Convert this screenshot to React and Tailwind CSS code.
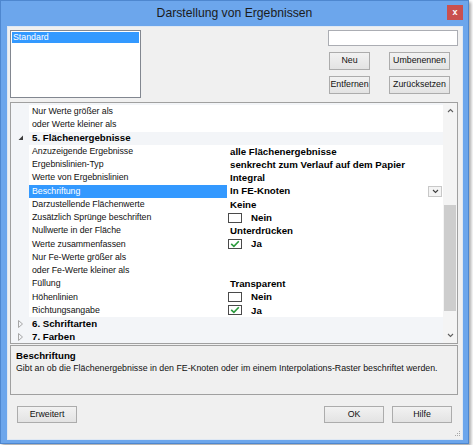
import React from "react";

const FONT = { fontFamily: '"Liberation Sans", Arial, sans-serif' };

function Btn({ children, w = "w-[60px]", h = "h-[18px]" }) {
  return (
    <div
      className={`${w} ${h} flex items-center justify-center border border-[#acacac] bg-gradient-to-b from-[#f2f2f2] to-[#e3e3e3] text-[8.8px] text-[#111]`}
    >
      {children}
    </div>
  );
}

function Check({ on }) {
  return (
    <div className="w-[14px] h-[10px] border border-[#4a4a4a] bg-white flex items-center justify-center">
      {on && (
        <svg width="10" height="8" viewBox="0 0 10 8">
          <path d="M1.2 3.8 L3.9 6.4 L8.8 1.2" fill="none" stroke="#2a9a3c" strokeWidth="1.6" />
        </svg>
      )}
    </div>
  );
}

function Expanded() {
  return (
    <svg width="6" height="6" viewBox="0 0 6 6">
      <polygon points="5,0.5 5,5 0.5,5" fill="#3c3c3c" />
    </svg>
  );
}

function Collapsed() {
  return (
    <svg width="6" height="8" viewBox="0 0 6 8">
      <polygon points="0.5,0.5 4.5,4 0.5,7.5" fill="none" stroke="#a6a6a6" strokeWidth="1" />
    </svg>
  );
}

const rows = [
  { label: "Nur Werte größer als" },
  { label: "oder Werte kleiner als" },
  { cat: "5. Flächenergebnisse", open: true },
  { label: "Anzuzeigende Ergebnisse", value: "alle Flächenergebnisse" },
  { label: "Ergebnislinien-Typ", value: "senkrecht zum Verlauf auf dem Papier" },
  { label: "Werte von Ergebnislinien", value: "Integral" },
  { label: "Beschriftung", value: "In FE-Knoten", selected: true, dropdown: true },
  { label: "Darzustellende Flächenwerte", value: "Keine" },
  { label: "Zusätzlich Sprünge beschriften", value: "Nein", check: false },
  { label: "Nullwerte in der Fläche", value: "Unterdrücken" },
  { label: "Werte zusammenfassen", value: "Ja", check: true },
  { label: "Nur Fe-Werte größer als" },
  { label: "oder Fe-Werte kleiner als" },
  { label: "Füllung", value: "Transparent" },
  { label: "Höhenlinien", value: "Nein", check: false },
  { label: "Richtungsangabe", value: "Ja", check: true },
  { cat: "6. Schriftarten" },
  { cat: "7. Farben" },
];

function Row({ r }) {
  if (r.cat) {
    return (
      <div className="h-[13.25px] flex items-center bg-[#f3f5f8]">
        <div className="w-[18px] h-full flex items-center justify-end pr-[5px]">
          {r.open ? <Expanded /> : <Collapsed />}
        </div>
        <span className="pl-[3px] text-[9.7px] font-bold text-black leading-none">{r.cat}</span>
      </div>
    );
  }
  return (
    <div className="h-[13.25px] flex items-stretch bg-white">
      <div className="w-[18px] bg-[#f3f5f8]" />
      <div
        className={`w-[198px] flex items-center pl-[3px] text-[8.8px] tracking-[-0.05px] leading-none ${
          r.selected ? "bg-[#3399ff] text-white" : "text-[#111]"
        }`}
      >
        {r.label}
      </div>
      <div className="w-px" />
      <div className="flex-1 flex items-center text-[9.7px] font-bold text-black leading-none">
        {r.check !== undefined ? (
          <div className="flex items-center gap-[9px]">
            <Check on={r.check} />
            <span>{r.value}</span>
          </div>
        ) : (
          <span className="pl-[2px]">{r.value}</span>
        )}
        {r.dropdown && (
          <div className="ml-auto mr-[1px] w-[14px] h-[11px] border border-[#c8c8c8] bg-[#f4f4f4] flex items-center justify-center">
            <svg width="7" height="5" viewBox="0 0 7 5">
              <path d="M1 1 L3.5 3.5 L6 1" fill="none" stroke="#404040" strokeWidth="1.1" />
            </svg>
          </div>
        )}
      </div>
    </div>
  );
}

export default function App() {
  return (
    <div className="w-[473px] h-[445px] bg-white overflow-hidden" style={FONT}>
      <div className="w-[469px] h-[444px] bg-[#6ca6ec] border border-[#4e87cf] shadow-[2px_2px_3px_rgba(0,0,0,0.35)] flex flex-col">
        {/* title bar */}
        <div className="h-[25px] relative flex items-center justify-center">
          <span className="text-[12.2px] text-[#1b1b1b] pb-[1px]">Darstellung von Ergebnissen</span>
          <div className="absolute right-[5px] top-[4px] w-[16px] h-[15px] bg-[#c9504f] flex items-center justify-center text-white text-[9px] font-bold leading-none pb-[1px]">
            x
          </div>
        </div>

        {/* client area */}
        <div className="relative ml-[6px] mr-[5px] h-[414px] bg-[#f0f0f0] border border-[#dfe8f3] pt-[3px] pl-[2px] pr-[4px] flex flex-col">
          {/* presets */}
          <div className="h-[68px] flex justify-between">
            <div className="w-[131px] h-[68px] border border-[#828790] bg-white p-[1px]">
              <div className="h-[11px] bg-[#3399ff] text-white text-[8.8px] leading-[11px] pl-[1px]">Standard</div>
            </div>
            <div className="w-[130px] flex flex-col">
              <div className="h-[16px] border border-[#abadb3] bg-white" />
              <div className="mt-[6px] flex gap-[19px] pl-[1px]">
                <Btn w="w-[41px]">Neu</Btn>
                <Btn w="w-[61px]">Umbenennen</Btn>
              </div>
              <div className="mt-[6px] flex gap-[19px] pl-[1px]">
                <Btn w="w-[41px]">Entfernen</Btn>
                <Btn w="w-[61px]">Zurücksetzen</Btn>
              </div>
            </div>
          </div>

          {/* property grid */}
          <div className="mt-[4px] h-[242px] border border-[#a0a0a0] bg-[#f3f5f8] flex">
            <div className="flex-1 pt-[2px] overflow-hidden">
              {rows.map((r, i) => (
                <Row key={i} r={r} />
              ))}
            </div>
            <div className="w-[14px] bg-[#f4f4f4] flex flex-col">
              <div className="h-[15px] flex items-center justify-center">
                <svg width="7" height="5" viewBox="0 0 7 5">
                  <path d="M1 4 L3.5 1.5 L6 4" fill="none" stroke="#606060" strokeWidth="1.1" />
                </svg>
              </div>
              <div className="flex-1 pt-[87px] pl-[1px] pr-[1px]">
                <div className="h-[106px] bg-[#cdcdcd]" />
              </div>
              <div className="h-[15px] flex items-center justify-center">
                <svg width="7" height="5" viewBox="0 0 7 5">
                  <path d="M1 1 L3.5 3.5 L6 1" fill="none" stroke="#606060" strokeWidth="1.1" />
                </svg>
              </div>
            </div>
          </div>

          {/* help pane */}
          <div className="mt-[1px] h-[50px] border border-[#a0a0a0] bg-[#f0f0f0] pl-[5px] pt-[4px]">
            <div className="text-[9.7px] font-bold text-black leading-[12px]">Beschriftung</div>
            <div className="text-[8.8px] text-[#111] leading-[12px]">
              Gibt an ob die Flächenergebnisse in den FE-Knoten oder im einem Interpolations-Raster beschriftet werden.
            </div>
          </div>

          {/* footer buttons */}
          <div className="mt-[11px] flex items-center pl-[7px] pr-[6px]">
            <Btn h="h-[17px]">Erweitert</Btn>
            <div className="ml-auto flex gap-[8px]">
              <Btn h="h-[17px]">OK</Btn>
              <Btn h="h-[17px]">Hilfe</Btn>
            </div>
          </div>

          {/* size grip */}
          <svg className="absolute right-[1px] bottom-[2px]" width="7" height="7" viewBox="0 0 7 7">
            <rect x="5" y="1" width="1" height="1" fill="#a8a8a8" />
            <rect x="3" y="3" width="1" height="1" fill="#a8a8a8" />
            <rect x="5" y="3" width="1" height="1" fill="#a8a8a8" />
            <rect x="1" y="5" width="1" height="1" fill="#a8a8a8" />
            <rect x="3" y="5" width="1" height="1" fill="#a8a8a8" />
            <rect x="5" y="5" width="1" height="1" fill="#a8a8a8" />
          </svg>
        </div>
      </div>
    </div>
  );
}
